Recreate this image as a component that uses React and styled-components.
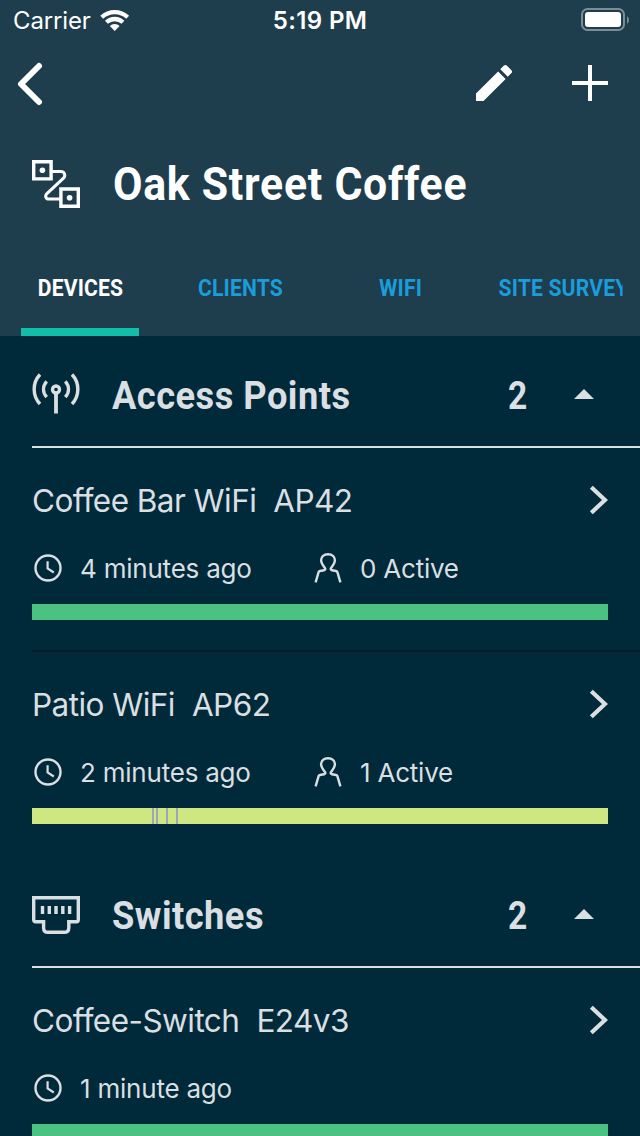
import React from 'react';
import styled, { createGlobalStyle } from 'styled-components';

const sections = [
  {
    title: 'Access Points',
    icon: 'antenna',
    devices: [
      { name: 'Coffee Bar WiFi', model: 'AP42', seen: '4 minutes ago', active: '0 Active', color: '#4bc281', gaps: [] },
      { name: 'Patio WiFi', model: 'AP62', seen: '2 minutes ago', active: '1 Active', color: '#cfe783', gaps: [120, 124, 134, 144] },
    ],
  },
  {
    title: 'Switches',
    icon: 'port',
    devices: [
      { name: 'Coffee-Switch', model: 'E24v3', seen: '1 minute ago', color: '#4bc281', gaps: [] },
    ],
  },
];

const tabs = ['DEVICES', 'CLIENTS', 'WIFI', 'SITE SURVEY'];

function SvgWifi() {
  return (
    <svg width="30" height="23" viewBox="0 0 30 23" fill="#fff">
      <path d="M.3 6.700a21 21 0 0 1 28.800 0L26.300 9.800a17 17 0 0 0-23.200 0z" />
      <path d="M5 11.700a14 14 0 0 1 19.400 0l-2.900 3.100a10 10 0 0 0-13.600 0z" />
      <path d="M9.800 17a7 7 0 0 1 9.800 0l-4.900 5z" />
    </svg>
  );
}

function SvgBattery() {
  return (
    <svg width="48" height="24" viewBox="0 0 48 24">
      <rect x="1" y="1" width="42" height="21" rx="5.5" fill="none" stroke="#7b8d96" strokeWidth="2" />
      <rect x="4" y="4" width="36" height="15" rx="3" fill="#fff" />
      <path d="M46 8v8q2-1.400 2-4t-2-4z" fill="#7b8d96" />
    </svg>
  );
}

function SvgSite() {
  return (
    <svg width="48" height="48" viewBox="0 0 48 48" fill="none" stroke="#fff" strokeWidth="3.4">
      <path d="M1.700 1.700h17.400v17.200H1.700zM28.900 29h17.400v17.300H28.900z" />
      <path d="M20 11.600h8.500c4.300 0 5.400 4 3 6.600L15.200 33.300c-2.800 2.800-1.300 5.800 1.600 5.800H28" strokeWidth="3" />
      <circle cx="10.400" cy="10.300" r="2.800" fill="#fff" stroke="none" />
      <circle cx="37.600" cy="37.800" r="2.800" fill="#fff" stroke="none" />
    </svg>
  );
}

function SvgAntenna() {
  return (
    <svg width="48" height="42" viewBox="0 0 48 42" fill="none" stroke="#d9dfe2" strokeWidth="3.4">
      <circle cx="24" cy="17.500" r="3.500" />
      <path d="M24 21v20.500" strokeWidth="3.800" />
      <path d="M8 2.500C.2 10.800.2 23.400 8 32M40 2.500c7.800 8.300 7.800 20.900 0 29.500" />
      <path d="M14.700 9.300c-4.200 4.800-4.200 11 0 15.800M33.300 9.300c4.200 4.800 4.200 11 0 15.800" />
    </svg>
  );
}

function SvgPort() {
  return (
    <svg width="48" height="38" viewBox="0 0 48 38" fill="none" stroke="#d9dfe2">
      <path strokeWidth="3.400" d="M1.700 1.700h44.600v22q0 2-2 2h-7.500v6q0 4.600-4.600 4.600H16q-4.400 0-4.400-4.600v-6H3.700q-2 0-2-2z" />
      <path strokeWidth="3.400" d="M10.500 10v8M17.300 10v8M24 10v8M30.800 10v8M37.600 10v8" />
    </svg>
  );
}

function SvgClock() {
  return (
    <svg width="32" height="32" viewBox="0 0 32 32" fill="none" stroke="#d9dfe2" strokeWidth="2.400">
      <circle cx="16" cy="16" r="12.500" />
      <path d="M15.600 9.200v7.300l6.200 4" strokeWidth="2.200" />
    </svg>
  );
}

function SvgPerson() {
  return (
    <svg width="32" height="32" viewBox="0 0 32 32" fill="none" stroke="#d9dfe2" strokeWidth="2.400">
      <path d="M3.600 30.400L6.600 20.200Q6.900 19.200 7.900 19L12 18.300Q14 17.800 12.900 15.900C10.600 13 9.100 11 9.100 8.300 9.100 4.600 12 2.300 16 2.300S22.900 4.600 22.900 8.300C22.900 11 21.400 13 19.100 15.900Q18 17.800 20 18.300L24.100 19Q25.100 19.200 25.400 20.200L28.400 30.400" />
    </svg>
  );
}

function Device({ device }) {
  return (
    <DeviceRow>
      <NameLine>
        <DeviceName>{device.name}</DeviceName>
        <DeviceName>{device.model}</DeviceName>
        <svg width="20" height="30" viewBox="0 0 20 30" fill="none" stroke="#d9dfe2" strokeWidth="4.200">
          <path d="M3.300 2.300L17 15 3.300 27.700" />
        </svg>
      </NameLine>
      <MetaLine>
        <Meta $width={280}>
          <SvgClock />
          <MetaText>{device.seen}</MetaText>
        </Meta>
        {device.active && (
          <Meta>
            <SvgPerson />
            <MetaText>{device.active}</MetaText>
          </Meta>
        )}
      </MetaLine>
      <Uptime $color={device.color}>
        {device.gaps.map((x) => (
          <Gap key={x} style={{ left: x }} />
        ))}
      </Uptime>
    </DeviceRow>
  );
}

function App() {
  return (
    <Screen>
      <GlobalStyle />
      <Header>
        <StatusBar>
          <Carrier>
            <span>Carrier</span>
            <SvgWifi />
          </Carrier>
          <Time>5:19 PM</Time>
          <Battery>
            <SvgBattery />
          </Battery>
        </StatusBar>
        <NavBar>
          <NavButton aria-label="Back">
            <svg width="28" height="44" viewBox="0 0 28 44" fill="none" stroke="#fff" strokeWidth="6" strokeLinecap="round" strokeLinejoin="round">
              <path d="M24 4L6 22l18 18" />
            </svg>
          </NavButton>
          <NavActions>
            <NavButton aria-label="Edit">
              <svg width="48" height="48" viewBox="0 0 24 24" fill="#fff">
                <path d="M3 17.250V21h3.750L17.810 9.940l-3.750-3.750L3 17.250zM20.710 7.040a1 1 0 0 0 0-1.410l-2.340-2.340a1 1 0 0 0-1.410 0l-1.830 1.830 3.750 3.750 1.830-1.830z" />
              </svg>
            </NavButton>
            <NavButton aria-label="Add">
              <svg width="36" height="36" viewBox="0 0 36 36" stroke="#fff" strokeWidth="4">
                <path d="M18 0v36M0 18h36" />
              </svg>
            </NavButton>
          </NavActions>
        </NavBar>
        <TitleRow>
          <SvgSite />
          <Title>Oak Street Coffee</Title>
        </TitleRow>
        <Tabs>
          {tabs.map((tab, i) => (
            <Tab key={tab} $selected={i === 0}>
              <TabLabel>{tab}</TabLabel>
            </Tab>
          ))}
        </Tabs>
      </Header>
      {sections.map((section) => (
        <section key={section.title}>
          <SectionHeader>
            <SectionIcon $drop={section.icon === 'port'}>
              {section.icon === 'antenna' ? <SvgAntenna /> : <SvgPort />}
            </SectionIcon>
            <SectionTitle>{section.title}</SectionTitle>
            <Count>2</Count>
            <svg width="20" height="10" viewBox="0 0 20 10" fill="#d9dfe2">
              <path d="M0 10L10 0l10 10z" />
            </svg>
          </SectionHeader>
          {section.devices.map((device) => (
            <Device key={device.name} device={device} />
          ))}
        </section>
      ))}
    </Screen>
  );
}

const GlobalStyle = createGlobalStyle`
  * {
    box-sizing: border-box;
  }
  body {
    margin: 0;
    background: #002a39;
    overflow: hidden;
  }
  svg {
    display: block;
    flex: none;
  }
`;

const Screen = styled.div`
  width: 640px;
  height: 1136px;
  overflow: hidden;
  background: #002a39;
  color: #d9dfe2;
  font-family: Inter, sans-serif;
  -webkit-font-smoothing: antialiased;
`;

const Header = styled.header`
  background: #1e3d4d;
  color: #fff;
  height: 336px;
  display: flex;
  flex-direction: column;
`;

const StatusBar = styled.div`
  height: 40px;
  padding: 0 11px 0 13px;
  display: grid;
  grid-template-columns: 1fr auto 1fr;
  align-items: center;
  font-size: 24px;
`;

const Carrier = styled.div`
  display: flex;
  align-items: center;
  gap: 9px;
  letter-spacing: -0.15px;
`;

const Time = styled.div`
  font-weight: 600;
  letter-spacing: 0.4px;
  margin-left: -2px;
`;

const Battery = styled.div`
  justify-self: end;
`;

const NavBar = styled.nav`
  height: 88px;
  padding: 0 32px 0 15px;
  display: flex;
  align-items: center;
  justify-content: space-between;
`;

const NavActions = styled.div`
  display: flex;
  align-items: center;
  gap: 54px;
  padding-bottom: 2px;
`;

const NavButton = styled.button`
  padding: 0;
  border: 0;
  background: none;
  color: inherit;
`;

const TitleRow = styled.div`
  height: 112px;
  padding-left: 32px;
  display: flex;
  align-items: center;
  gap: 32px;
`;

const Title = styled.h1`
  margin: 0;
  padding-left: 1px;
  font: 700 46px/56px Roboto, sans-serif;
  letter-spacing: 0.8px;
  white-space: nowrap;
  transform: scaleX(0.93);
  transform-origin: left;
`;

const Tabs = styled.div`
  display: flex;
  height: 96px;
`;

const Tab = styled.div`
  flex: 0 0 160px;
  display: flex;
  align-items: center;
  justify-content: center;
  color: ${(props) => (props.$selected ? '#fff' : '#1b9cdb')};
  background: ${(props) =>
    props.$selected ? 'linear-gradient(#11bfa8, #11bfa8) 21px 88px / 118px 8px no-repeat' : 'none'};
`;

/* 141px scaled down to the 124px label slot */
const TabLabel = styled.span`
  flex: none;
  width: 141px;
  overflow: hidden;
  font: 700 24px/32px Roboto, sans-serif;
  letter-spacing: 0.2px;
  text-align: center;
  white-space: nowrap;
  transform: scaleX(0.88);
`;

const SectionHeader = styled.div`
  height: 112px;
  margin-left: 32px;
  padding: 6px 46px 0 0;
  border-bottom: 2px solid #d9dfe2;
  display: flex;
  align-items: center;
`;

const SectionIcon = styled.div`
  width: 80px;
  padding-top: ${(props) => (props.$drop ? '2px' : '0')};
  padding-bottom: ${(props) => (props.$drop ? '0' : '2px')};
`;

const SectionTitle = styled.h2`
  margin: 0;
  flex: 1;
  padding-top: 4px;
  font: 700 39px/52px Roboto, sans-serif;
  letter-spacing: 0.5px;
  transform: scaleX(0.93);
  transform-origin: left;
`;

const Count = styled.span`
  width: 66px;
  padding-top: 4px;
  font: 700 39px/52px Roboto, sans-serif;
  transform: scaleX(0.86);
  transform-origin: left;
`;

const DeviceRow = styled.div`
  height: 204px;
  margin-left: 32px;
  padding: 32px 32px 0 0;
  border-bottom: 2px solid #001c27;

  &:last-child {
    border-bottom-color: transparent;
  }
`;

const NameLine = styled.div`
  height: 40px;
  display: flex;
  align-items: center;
  gap: 17px;

  svg {
    margin-left: auto;
  }
`;

const DeviceName = styled.span`
  padding-top: 2px;
  font-size: 31.5px;
  line-height: 40px;
  letter-spacing: -0.55px;
  white-space: pre;
`;

const MetaLine = styled.div`
  height: 32px;
  margin-top: 32px;
  display: flex;
`;

const Meta = styled.div`
  width: ${(props) => (props.$width ? props.$width + 'px' : 'auto')};
  display: flex;
  align-items: center;
  gap: 16px;
`;

const MetaText = styled.span`
  padding-top: 2px;
  font-size: 26px;
  line-height: 32px;
  letter-spacing: -0.22px;
`;

const Uptime = styled.div`
  position: relative;
  height: 16px;
  margin-top: 20px;
  background: ${(props) => props.$color};
`;

const Gap = styled.i`
  position: absolute;
  top: 0;
  width: 2px;
  height: 16px;
  background: #9ca8ae;
`;

export default App;
